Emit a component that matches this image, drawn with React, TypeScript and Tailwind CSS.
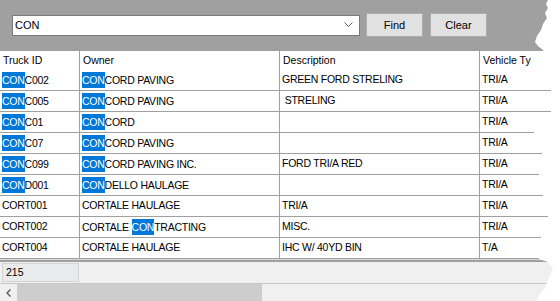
import React from 'react';

type Truck = {
  id: string;
  owner: string;
  description: string;
  vehicleType: string;
};

const trucks: Truck[] = [
  { id: 'CONC002', owner: 'CONCORD PAVING', description: 'GREEN FORD STRELING', vehicleType: 'TRI/A' },
  { id: 'CONC005', owner: 'CONCORD PAVING', description: ' STRELING', vehicleType: 'TRI/A' },
  { id: 'CONC01', owner: 'CONCORD', description: '', vehicleType: 'TRI/A' },
  { id: 'CONC07', owner: 'CONCORD PAVING', description: '', vehicleType: 'TRI/A' },
  { id: 'CONC099', owner: 'CONCORD PAVING INC.', description: 'FORD TRI/A RED', vehicleType: 'TRI/A' },
  { id: 'COND001', owner: 'CONDELLO HAULAGE', description: '', vehicleType: 'TRI/A' },
  { id: 'CORT001', owner: 'CORTALE HAULAGE', description: 'TRI/A', vehicleType: 'TRI/A' },
  { id: 'CORT002', owner: 'CORTALE CONTRACTING', description: 'MISC.', vehicleType: 'TRI/A' },
  { id: 'CORT004', owner: 'CORTALE HAULAGE', description: 'IHC W/ 40YD BIN', vehicleType: 'T/A' },
];

const search = 'CON';

// wraps the first match of the search text in a blue selection box
function Highlight({ text }: { text: string }) {
  const i = text.indexOf(search);
  if (i < 0) return <span className="whitespace-pre">{text}</span>;
  return (
    <span className="whitespace-pre">
      {text.slice(0, i)}
      <span className="inline-block h-[16px] leading-[16px] bg-[#0078d7] text-white">{text.slice(i, i + search.length)}</span>
      {text.slice(i + search.length)}
    </span>
  );
}

export default function App() {
  return (
    <div className="w-[560px] h-[301px] bg-white overflow-hidden font-['Liberation_Sans',Arial,sans-serif] text-[10.5px] text-black">
      <div className="h-full flex flex-col [clip-path:polygon(0_0,548px_0,546px_4px,548px_8px,545px_13px,547px_18px,543px_24px,541px_30px,537px_36px,535px_42px,538px_46px,543px_50px,545px_55px,549px_60px,551px_68px,551px_112px,534px_122px,534px_133px,542px_145px,542px_154px,539px_165px,539px_175px,543px_186px,543px_196px,548px_207px,548px_217px,541px_228px,541px_238px,539px_249px,539px_259px,548px_262px,553px_268px,550px_275px,547px_282px,545px_288px,540px_294px,536px_301px,0_301px)]">
        {/* Search bar */}
        <div className="h-[50px] bg-[#a0a0a0] flex items-center shrink-0">
          <div className="ml-[12px] w-[348px] h-[21px] bg-white border border-[#7a7a7a] flex items-center pl-[2px] pr-[6px]">
            <span className="flex-1 text-[11px]">CON</span>
            <svg width="9" height="6" viewBox="0 0 9 6" className="text-[#606060]">
              <polyline points="0.5,0.5 4.5,4.5 8.5,0.5" fill="none" stroke="currentColor" strokeWidth="1" />
            </svg>
          </div>
          <button className="ml-[6px] w-[57px] h-[24px] bg-[#e1e1e1] border border-[#adadad] text-[11px]">Find</button>
          <button className="ml-[7px] w-[57px] h-[24px] bg-[#e1e1e1] border border-[#adadad] text-[11px]">Clear</button>
        </div>

        {/* Grid */}
        <div className="flex flex-col shrink-0">
          <div className="h-[20px] flex border-t border-[#a0a0a0]">
            <div className="w-[80px] border-r border-[#a0a0a0] pl-[3px] flex items-center">Truck ID</div>
            <div className="w-[200px] border-r border-[#a0a0a0] pl-[3px] flex items-center">Owner</div>
            <div className="w-[200px] border-r border-[#a0a0a0] pl-[3px] flex items-center">Description</div>
            <div className="w-[51px] pl-[3px] flex items-center overflow-hidden whitespace-nowrap">Vehicle Type</div>
          </div>
          {trucks.map((t) => (
            <div key={t.id} className="h-[21px] flex border-b border-[#a0a0a0] tracking-[-0.25px]">
              <div className="w-[80px] border-r border-[#a0a0a0] pl-[2px] flex items-center">
                <Highlight text={t.id} />
              </div>
              <div className="w-[200px] border-r border-[#a0a0a0] pl-[2px] flex items-center">
                <Highlight text={t.owner} />
              </div>
              <div className="w-[200px] border-r border-[#a0a0a0] pl-[2px] flex items-center whitespace-pre">{t.description}</div>
              <div className="w-[51px] pl-[2px] flex items-center">{t.vehicleType}</div>
            </div>
          ))}
          <div className="h-px bg-[#d8d8d8]" />
          <div className="h-[2px] bg-[#a0a0a0]" />
        </div>

        {/* Status */}
        <div className="h-[21px] bg-[#f0f0f0] shrink-0 flex items-start">
          <div className="ml-[2px] mt-px w-[77px] h-[19px] border border-[#d4d4d4] bg-[#e8eaec] flex items-center pl-[3px]">215</div>
        </div>
        <div className="h-px bg-[#c8c8c8] shrink-0" />

        {/* Horizontal scrollbar */}
        <div className="h-[17px] bg-[#f0f0f0] flex items-stretch shrink-0">
          <div className="w-[17px] flex items-center justify-center">
            <svg width="5" height="8" viewBox="0 0 5 8" className="text-[#606060]">
              <polyline points="4.5,0.5 1,4 4.5,7.5" fill="none" stroke="currentColor" strokeWidth="1.5" />
            </svg>
          </div>
          <div className="w-[245px] bg-[#cdcdcd]" />
        </div>
      </div>
    </div>
  );
}
